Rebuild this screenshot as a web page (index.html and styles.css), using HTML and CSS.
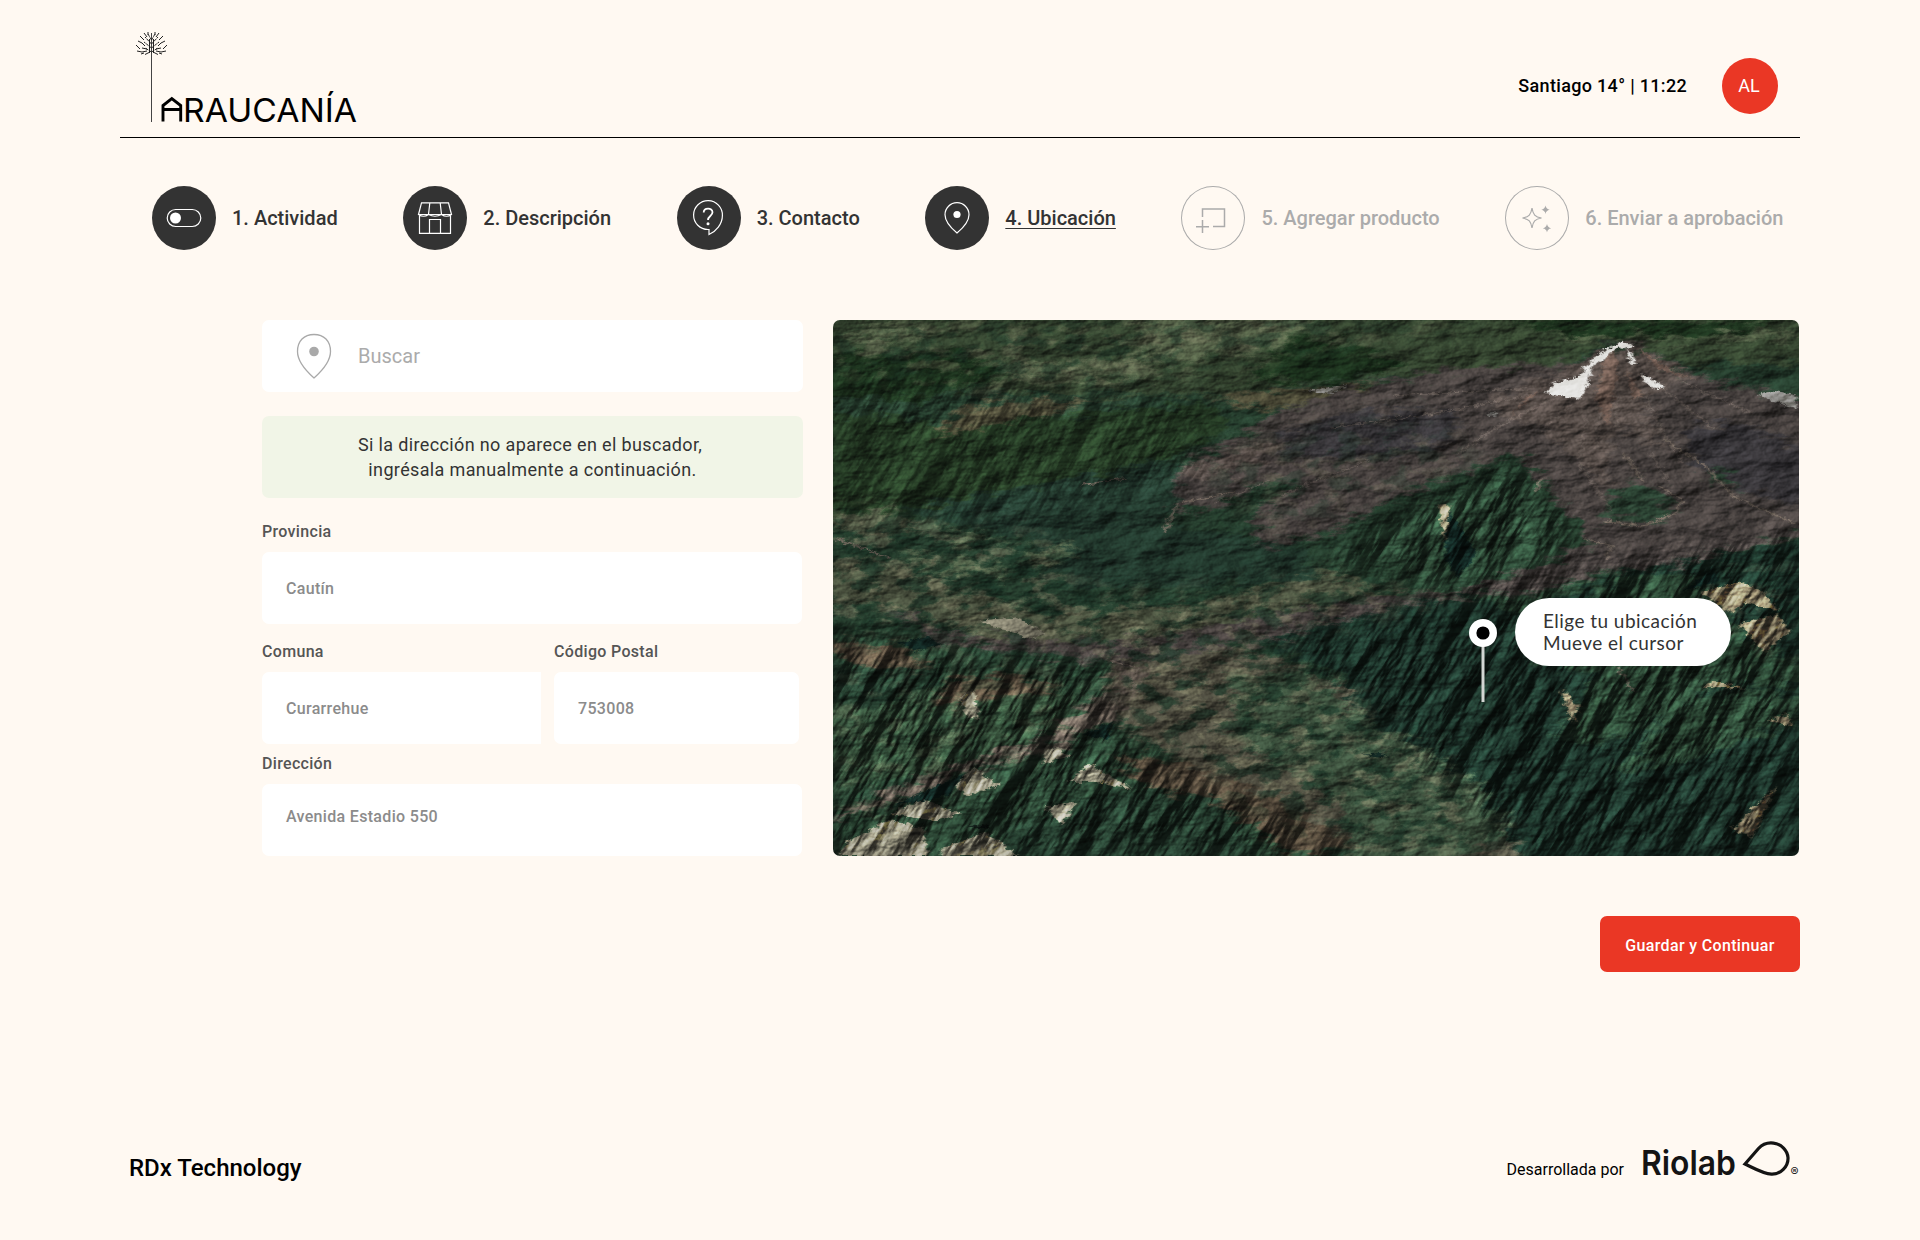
FILE: index.html
```html
<!DOCTYPE html>
<html lang="es">
<head>
<meta charset="utf-8">
<title>Araucanía – Ubicación</title>
<link rel="stylesheet" href="styles.css">
</head>
<body>
<header class="header">
  <svg class="logo" width="230" height="98" viewBox="0 0 230 98" role="img" aria-label="Araucanía">
    <g fill="none" stroke="#222" stroke-width="1">
      <path stroke="#444" d="M16.500 1V90"/>
      <path stroke-dasharray="3 .8" d="M16.500 20L10 16M16.500 16L9 10M16.500 12L10 5M16.500 20L23 16M16.500 16L24 10M16.500 12L23 5M16.500 8L13 2M16.500 8L20 2"/>
      <path d="M9 1l3 4M5 4l4 4M13 0v3M20 0v3M24 1l-3 4M28 4l-4 4M3 9l4 2 3 3M30 9l-4 2-3 3M1 13l4 4M32 13l-4 4M7 16l5 1M26 16l-5 1M2 19l5 1 5-1M31 19l-5 1-5-1M10 22.500l4-2M23 22.500l-4-2M6 22l3-1M27 22l-3-1M14.500 7v14M18.500 7v14"/>
    </g>
    <path d="M28 89.500V73.500L36.800 66.500L45.700 73.500V89.500M28 77.500H45.700" fill="none" stroke="#000" stroke-width="2.900"/>
    <text class="logo-word" x="48" y="89.500" textLength="174" lengthAdjust="spacingAndGlyphs">RAUCANÍA</text>
  </svg>
  <div class="session">
    <span class="weather">Santiago 14° | 11:22</span>
    <span class="avatar">AL</span>
  </div>
</header>

<nav class="steps">
  <div class="step">
    <svg class="step-icon" viewBox="0 0 64 64"><rect x="15.200" y="23.500" width="33.600" height="17" rx="8.500"/><circle class="solid" cx="23.500" cy="32" r="5.500"/></svg>
    <span>1. Actividad</span>
  </div>
  <div class="step">
    <svg class="step-icon" viewBox="0 0 64 64"><path d="M18.500 16.800H45.500L48.500 28.500H15.500ZM26.800 17L25.500 28.500M37.200 17L38.500 28.500M15.500 28.500Q20.500 32 25.500 28.500Q32 32 38.500 28.500Q43.500 32 48.500 28.500M16.500 29V47.300H47.500V29M26.500 47V33.500H37.500V47"/></svg>
    <span>2. Descripción</span>
  </div>
  <div class="step">
    <svg class="step-icon" viewBox="0 0 64 64"><path d="M32 48.500V43.500H31A14.400 14.400 0 1 1 45.400 29.500C45.400 38 39 45.500 32 48.500Z"/><path stroke-width="1.800" d="M26.700 26.500C26.700 21.500 35.500 21.500 35.500 26.300C35.500 30 31 30 31 34"/><circle class="solid" cx="31" cy="37.800" r="1.500"/></svg>
    <span>3. Contacto</span>
  </div>
  <div class="step current">
    <svg class="step-icon" viewBox="0 0 64 64"><path d="M32 47C25.500 41.500 20 35.500 20 28.700A12 12 0 0 1 44 28.700C44 35.500 38.500 41.500 32 47Z"/><circle class="solid" cx="32" cy="28.500" r="3.600"/></svg>
    <span>4. Ubicación</span>
  </div>
  <div class="step pending">
    <svg class="step-icon" viewBox="0 0 64 64"><path stroke-width="1.500" d="M21.500 31V23H43.500V40.500H32M21.500 34V47M15 40.800H28"/></svg>
    <span>5. Agregar producto</span>
  </div>
  <div class="step pending">
    <svg class="step-icon" viewBox="0 0 64 64"><path d="M27 22C28 28.500 30 31 36.500 32C30 33 28 35.500 27 42C26 35.500 24 33 17.500 32C24 31 26 28.500 27 22Z"/><path class="solid" d="M40.500 19.500q.6 3.500 4.200 4.200q-3.600.7-4.200 4.200q-.6-3.500-4.200-4.200q3.600-.7 4.200-4.200ZM42 38q.6 3.500 4.200 4.200q-3.600.7-4.200 4.200q-.6-3.500-4.200-4.200q3.600-.7 4.200-4.200Z"/></svg>
    <span>6. Enviar a aprobación</span>
  </div>
</nav>

<main class="content">
  <form class="form">
    <div class="search">
      <svg width="36" height="48" viewBox="0 0 36 48"><path d="M18 46C9 38 1.500 29.500 1.500 19.500C1.500 9 8 2.500 18 2.500S34.500 9 34.500 19.500C34.500 29.500 27 38 18 46Z" fill="none" stroke="#a9a9a9" stroke-width="1.300"/><circle cx="18" cy="19.500" r="4.800" fill="#a9a9a9"/></svg>
      <span>Buscar</span>
    </div>
    <p class="hint">Si la dirección no aparece en el buscador,&nbsp;<br>ingrésala manualmente a continuación.</p>
    <div class="field province">
      <span class="label">Provincia</span>
      <div class="input">Cautín</div>
    </div>
    <div class="pair">
      <div class="field">
        <span class="label">Comuna</span>
        <div class="input square-end">Curarrehue</div>
      </div>
      <div class="field">
        <span class="label">Código Postal</span>
        <div class="input">753008</div>
      </div>
    </div>
    <div class="field address">
      <span class="label">Dirección</span>
      <div class="input">Avenida Estadio 550</div>
    </div>
  </form>

  <div class="map">
    <svg class="terrain" width="966" height="536" viewBox="0 0 966 536">
      <defs>
        <filter id="rough" x="-10%" y="-10%" width="120%" height="120%" color-interpolation-filters="sRGB">
          <feTurbulence type="fractalNoise" baseFrequency=".03 .05" numOctaves="6" seed="4" result="n"/>
          <feGaussianBlur in="SourceGraphic" stdDeviation="6"/>
          <feDisplacementMap in2="n" scale="70" xChannelSelector="R" yChannelSelector="G"/>
        </filter>
        <filter id="fine" x="-10%" y="-10%" width="120%" height="120%" color-interpolation-filters="sRGB">
          <feTurbulence type="fractalNoise" baseFrequency=".09" numOctaves="4" seed="9" result="n"/>
          <feGaussianBlur in="SourceGraphic" stdDeviation="1.300"/>
          <feDisplacementMap in2="n" scale="17" xChannelSelector="R" yChannelSelector="G"/>
        </filter>
        <filter id="relief" x="0" y="0" width="100%" height="100%" color-interpolation-filters="sRGB">
          <feTurbulence type="fractalNoise" baseFrequency=".02 .045" numOctaves="6" seed="12"/>
          <feDiffuseLighting surfaceScale="6" lighting-color="#fff"><feDistantLight azimuth="205" elevation="30"/></feDiffuseLighting>
        </filter>
        <filter id="ridges" x="0" y="0" width="100%" height="100%" color-interpolation-filters="sRGB">
          <feTurbulence type="fractalNoise" baseFrequency=".009 .034" numOctaves="5" seed="21"/>
          <feDiffuseLighting surfaceScale="15" lighting-color="#fff"><feDistantLight azimuth="250" elevation="28"/></feDiffuseLighting>
        </filter>
        <filter id="patches" x="0" y="0" width="100%" height="100%" color-interpolation-filters="sRGB">
          <feTurbulence type="fractalNoise" baseFrequency=".035 .075" numOctaves="5" seed="33"/>
          <feColorMatrix values="0 0 0 0 .46  0 0 0 0 .45  0 0 0 0 .34  7 0 0 0 -3.600"/>
        </filter>
        <filter id="darks" x="0" y="0" width="100%" height="100%" color-interpolation-filters="sRGB">
          <feTurbulence type="fractalNoise" baseFrequency=".04 .07" numOctaves="5" seed="52"/>
          <feColorMatrix values="0 0 0 0 .08  0 0 0 0 .19  0 0 0 0 .13  7 0 0 0 -3.500"/>
        </filter>
        <filter id="soft"><feGaussianBlur stdDeviation="14"/></filter>
        <mask id="fieldMask"><g filter="url(#soft)"><g transform="scale(.638 .3573) translate(-20 -28)" fill="#fff">
          <path d="M0 550L120 570L400 660L380 780L620 800L800 740L1000 790L560 980L700 960L840 1080L1000 1290L1100 1528H850L600 1300L480 1150L450 980L200 920L0 900Z"/>
          <path fill="#aaa" d="M0 20H1100L800 110L500 200L300 280L0 150Z"/>
          <path fill="#777" d="M20 1000H400V1200L20 1500ZM1350 720H1534V980H1420ZM560 420L900 280L1050 420L720 640Z"/>
        </g></g></mask>
        <mask id="ridgeMask"><g filter="url(#soft)"><g transform="scale(.638 .3573) translate(-20 -28)" fill="#fff">
          <path d="M700 940L1020 790L1534 620V1540H1100L830 1060ZM20 900L450 990L480 1200L900 1540H0ZM780 700L1090 420L1200 660L1000 780Z"/>
          <path fill="#777" d="M20 150L600 250V480L300 600H20Z"/>
        </g></g></mask>
      </defs>
      <rect width="966" height="536" fill="#203b29"/>

      <g transform="scale(.638 .3573) translate(-20 -28)">
        <g filter="url(#rough)">
          <path fill="#30422a" d="M-40 -40H1600V150H1340L1250 80L1150 170L850 190L600 240L-40 220Z"/>
          <path fill="#4a583c" d="M500 20H780L700 100L560 150L480 120ZM60 40L180 60L140 90L40 80ZM1150 50L1520 60V85H1160ZM260 150L520 150L540 190L380 200Z"/>
          <path fill="#183119" d="M-20 130L220 120L300 180L160 250H-20ZM690 150L740 70L850 110L920 150L820 200L680 195ZM1090 30L1500 30L1400 75L1150 70Z"/>
          <path fill="#20391f" d="M-20 280L200 320L620 260L640 330L500 450L280 560L-20 590Z"/>
          <path fill="#4d4a33" d="M240 260L440 250L340 300L180 350ZM620 240L760 220L880 195L830 245L690 285Z"/>
          <path fill="#1d372a" d="M130 560L540 420L610 480L530 600L740 650L800 760L380 780L340 650Z"/>
          <path fill="#464f39" d="M-20 580L120 560L150 630L50 630ZM-20 700L120 710L200 780L350 850L560 830L640 800L810 730L1000 800L580 900L440 940L260 920L160 850L-20 800Z"/>
          <path fill="#4c5e42" d="M190 620L290 640L220 660ZM310 690L390 650L400 680L330 715ZM120 680L220 690L300 740L180 740Z"/>
          <path fill="#4c4a3b" d="M440 930L680 960L830 1060L850 1140L960 1240L1010 1300L1100 1440V1560H880L600 1310L470 1150Z"/>
          <path fill="#385039" d="M640 1020L760 1010L830 1110L860 1150L1050 1330L1080 1460L970 1560H850L790 1340L650 1210Z"/>
        </g>

        <g filter="url(#rough)">
          <path fill="#463f3c" d="M1260 85L1330 160L1430 210L1600 270V600L1460 660L1340 720L1230 730L1130 790L1010 800L860 860L720 920L560 970L480 990L380 970L170 930L110 840L220 910L460 930L560 900L680 860L820 820L1000 770L1170 690L1190 620L1090 400L950 490L770 640L690 660L680 560L760 490L700 480L640 540L560 570L550 460L660 350L720 280L850 210L1010 160L1190 150Z"/>
          <path fill="#353337" d="M740 330L850 280L1000 290L980 370L860 410L720 410ZM1350 330L1450 320L1580 410V560L1430 500L1370 430Z"/>
          <path fill="#574c46" d="M1050 250L1220 130L1270 90L1360 180L1290 250L1320 400L1250 310L1230 500L1170 390L1130 320L1080 310ZM570 440L720 350L690 430L590 480Z"/>
          <path fill="#574d44" d="M460 990L505 1000L500 1080L455 1150L380 1220L230 1290L130 1370L-20 1450L110 1340L220 1270L360 1180L415 1100L470 1060Z"/>
        </g>

        <g filter="url(#rough)">
          <path fill="#213d2a" d="M790 720L920 580L1090 420L1130 470L1200 660L1100 730L1000 790L880 790Z"/>
          <path fill="#284431" d="M1235 520L1280 475L1345 540L1310 595L1230 590ZM1385 440L1420 450L1435 500L1400 490Z"/>
          <path fill="#152d23" d="M690 930L880 840L1010 800L1100 850L1240 740L1600 620V1600H1120L1040 1330L960 1250L840 1120L820 1030Z"/>
          <path fill="#213d2a" d="M1240 750L1370 740L1450 900L1600 1050L1400 1050L1280 1190L1150 1220L1220 1020L1130 990ZM1350 1100L1440 1060L1600 1100L1400 1240L1240 1300Z"/>
          <path fill="#29442e" d="M-20 1120L200 1030L380 1040L410 1100L350 1190L180 1290L-20 1360Z"/>
          <path fill="#1c3526" d="M280 1470L460 1340L620 1350L700 1560H300ZM-20 1000L160 990L200 1040L80 1110L-20 1090Z"/>
          <path fill="#493e2f" d="M-20 930L120 940L180 1000L90 1010ZM200 1040L290 1010L380 1070L280 1080L180 1110ZM460 1250L560 1260L720 1370L840 1500L740 1530L620 1370L510 1330Z"/>
        </g>
      </g>

      <g mask="url(#fieldMask)"><rect width="966" height="536" filter="url(#patches)" opacity=".5"/><rect width="966" height="536" filter="url(#darks)" opacity=".7"/></g>

      <g transform="scale(.638 .3573) translate(-20 -28)">
        <g filter="url(#fine)">
          <path fill="none" stroke="#75675f" stroke-width="3" opacity=".6" d="M1225 240L1215 390M1245 230L1250 330M1290 230L1320 340L1350 430M1180 260L1130 340M1150 245L1060 330L1000 400M1320 220L1400 330M1350 200L1460 290M1120 235L960 290L800 330M1110 220L900 240M1200 300L1190 430L1240 560M1300 400L1330 480M700 480L620 540M860 420L720 520"/>
          <path fill="#6f574c" d="M1275 100L1340 175L1380 200L1315 165ZM1230 130L1215 250L1235 325L1250 180L1245 110ZM1262 160L1290 240L1275 250ZM1080 300L1110 240L1130 220L1100 270Z"/>
          <path fill="#e4e3df" d="M1222 118L1260 88L1275 100L1262 110L1250 104L1240 122L1210 160L1205 200L1190 250L1136 232L1150 205L1190 185L1205 150ZM1262 108L1272 122L1278 152L1270 150ZM1284 176L1302 190L1324 216L1312 222L1294 208Z"/>
          <path fill="#8a8984" d="M1470 235L1495 225L1530 240V275L1490 255ZM1045 295L1060 285L1055 300ZM760 228L800 215L828 210L800 235Z"/>
          <path fill="#857b5c" d="M1380 790L1440 760L1480 790L1500 840L1450 820L1430 850ZM1440 880L1500 850L1520 900L1480 960ZM1380 1060L1400 1035L1450 1060L1405 1055ZM1490 1150L1515 1130L1525 1165ZM970 545L984 540L988 600L978 650ZM1160 1060L1190 1110L1180 1160ZM1430 1450L1500 1330L1460 1480Z"/>
          <path fill="#7f7b66" d="M40 1490L110 1425L160 1450L170 1528H30ZM190 1510L260 1460L310 1528H190ZM210 1330L240 1280L280 1330L230 1360ZM110 1410L160 1370L220 1410L180 1430ZM390 1320L420 1270L490 1340L430 1320ZM350 1390L400 1380L380 1440ZM220 1090L240 1060L250 1145L230 1140ZM350 1230L375 1225L390 1250L350 1270ZM245 870L310 860L355 905L330 920Z"/>
          <path fill="none" stroke="#695d52" stroke-width="4" d="M1230 590L1290 605L1340 570L1350 530L1310 490M1260 400L1290 480M1320 360L1390 440L1430 520L1530 600M25 640L110 695M1200 640L1240 660L1230 700M540 620L560 540L650 510M1250 1000L1275 1070M450 980L495 1000L490 1080M1130 470L1120 510M410 490L480 470"/>
          <path fill="#0d2520" d="M120 930L170 915L190 935L150 955ZM410 1190L460 1150L450 1200ZM985 560L1030 680L1000 750L978 690ZM1350 790L1400 720L1410 760ZM110 1390L230 1295L200 1360ZM850 1245L880 1240L890 1253Z"/>
          <path fill="none" stroke="#0d1815" stroke-width="6" d="M237 1450Q250 1436 262 1450"/>
        </g>
      </g>

      <rect class="shade" width="966" height="536" filter="url(#relief)" opacity=".65"/>
      <g mask="url(#ridgeMask)" class="shade" opacity=".65"><g transform="rotate(-58 483 268)"><rect x="-180" y="-320" width="1330" height="1180" filter="url(#ridges)"/></g></g>
    </svg>
    <div class="marker">
      <svg class="pin" width="28" height="84" viewBox="0 0 28 84"><path d="M14 24V83" stroke="#d3d6d3" stroke-width="3"/><circle cx="14" cy="14" r="14" fill="#fff"/><circle cx="14" cy="14" r="6.600"/></svg>
      <div class="tooltip">Elige tu ubicación<br>Mueve el cursor</div>
    </div>
  </div>
</main>

<div class="actions"><button class="save" type="button">Guardar y Continuar</button></div>

<footer class="footer">
  <span class="company">RDx Technology</span>
  <div class="credit">
    <span>Desarrollada por</span>
    <svg width="162" height="44" viewBox="-2 0 162 44" role="img" aria-label="Riolab">
      <text class="riolab" x="1" y="38" textLength="95" lengthAdjust="spacingAndGlyphs">Riolab</text>
      <path d="M105 27L118.500 11.500C123.500 6 128.500 5.500 133.500 6.100C141.500 7 147.500 13.500 148 20.500C148.500 29.500 140.500 37.500 131.500 37.200C123.500 36.800 113.500 31 105 27Z" fill="none" stroke="#141414" stroke-width="3.200"/>
      <text class="registered" x="150.500" y="39">®</text>
    </svg>
  </div>
</footer>
</body>
</html>
```
FILE: styles.css
```css
* { box-sizing: border-box; }

body {
  margin: 0;
  width: 1920px;
  height: 1240px;
  padding: 0 120px;
  overflow: hidden;
  display: flex;
  flex-direction: column;
  background: #fff9f2;
  font-family: Roboto, "Liberation Sans", sans-serif;
  color: #000;
}

.header {
  height: 138px;
  flex: none;
  padding: 32px 22px 0 15px;
  border-bottom: 1px solid #000;
  display: flex;
  justify-content: space-between;
  align-items: flex-start;
}
.logo { display: block; overflow: visible; }
.logo-word { font: 400 33px Inter, "Liberation Sans", sans-serif; }
.session { display: flex; align-items: center; gap: 35px; padding-top: 26px; }
.weather { font-size: 18px; font-weight: 500; letter-spacing: .32px; margin-top: -2px; }
.avatar {
  width: 56px;
  height: 56px;
  border-radius: 50%;
  background: #ea3725;
  color: #fff;
  font-size: 18px;
  display: grid;
  place-items: center;
  padding: 0 2px 1px 0;
}

.steps {
  margin-top: 48px;
  height: 64px;
  padding: 0 16.5px 0 32px;
  display: flex;
  justify-content: space-between;
}
.step {
  display: flex;
  align-items: center;
  gap: 16px;
  font-size: 20px;
  font-weight: 500;
  color: #333;
  white-space: nowrap;
}
.step-icon {
  width: 64px;
  height: 64px;
  border-radius: 50%;
  background: #333;
  fill: none;
  stroke: #fff;
  stroke-width: 1.2;
}
.step-icon .solid { fill: #fff; stroke: none; }
.step.current span { text-decoration: underline; text-decoration-thickness: 1px; text-underline-offset: 3px; }
.step.pending { color: #ababab; }
.pending .step-icon { background: none; stroke: #ababab; box-shadow: inset 0 0 0 1px #ababab; }
.pending .step-icon .solid { fill: #ababab; }

.content {
  margin: 70px 0 0 142px;
  display: grid;
  grid-template-columns: 541px 966px;
  column-gap: 30px;
  height: 536px;
}
.form { display: flex; flex-direction: column; }
.search {
  height: 72px;
  background: #fff;
  border-radius: 7px;
  display: flex;
  align-items: center;
  gap: 26px;
  padding-left: 34px;
  font-size: 20px;
  color: #ababab;
}
.hint {
  margin: 24px 0 0;
  height: 82px;
  padding-top: 16px;
  border-radius: 7px;
  background: #f1f5e7;
  color: #333;
  font-size: 18px;
  line-height: 25px;
  letter-spacing: .36px;
  text-align: center;
}
.field { display: flex; flex-direction: column; gap: 10px; }
.label { font-size: 16px; line-height: 20px; font-weight: 500; letter-spacing: .32px; color: #555; }
.input {
  height: 72px;
  padding: 0 24px;
  border-radius: 7px;
  background: #fff;
  color: #8b8b8b;
  font-size: 16px;
  font-weight: 500;
  letter-spacing: .32px;
  display: flex;
  align-items: center;
}
.square-end { border-radius: 7px 0 0 7px; }
.province { margin: 24px 1px 0 0; }
.pair { margin-top: 18px; display: grid; grid-template-columns: 279px 245px; column-gap: 13px; }
.address { margin: 10px 1px 0 0; }
.address .input { padding-bottom: 8px; }

.map { position: relative; border-radius: 7px; overflow: hidden; isolation: isolate; }
.terrain { display: block; filter: saturate(.82); }
.shade { mix-blend-mode: overlay; }
.marker { position: absolute; left: 636px; top: 278px; display: flex; gap: 18px; }
.pin { margin-top: 21px; }
.tooltip {
  width: 216px;
  height: 68px;
  border-radius: 34px;
  background: #fff;
  padding: 12px 0 0 28px;
  color: #333;
  font: 400 19px/22px Lato, sans-serif;
  letter-spacing: .45px;
}

.actions { display: flex; justify-content: flex-end; margin-top: 60px; }
.save {
  width: 200px;
  height: 56px;
  padding: 2px 0 0;
  border: 0;
  border-radius: 7px;
  background: #ea3725;
  color: #fff;
  font: 500 16px Roboto, sans-serif;
  letter-spacing: .34px;
}

.footer {
  margin-top: 165px;
  padding-left: 9px;
  display: flex;
  justify-content: space-between;
  align-items: flex-start;
}
.company { font-size: 24px; line-height: 28px; font-weight: 500; margin-top: 17px; }
.credit { display: flex; gap: 14px; font-size: 16px; }
.credit span { line-height: 20px; margin-top: 23px; }
.riolab { font: 600 34px Inter, sans-serif; fill: #141414; }
.registered { font: 400 12px Inter, sans-serif; fill: #141414; }
```
